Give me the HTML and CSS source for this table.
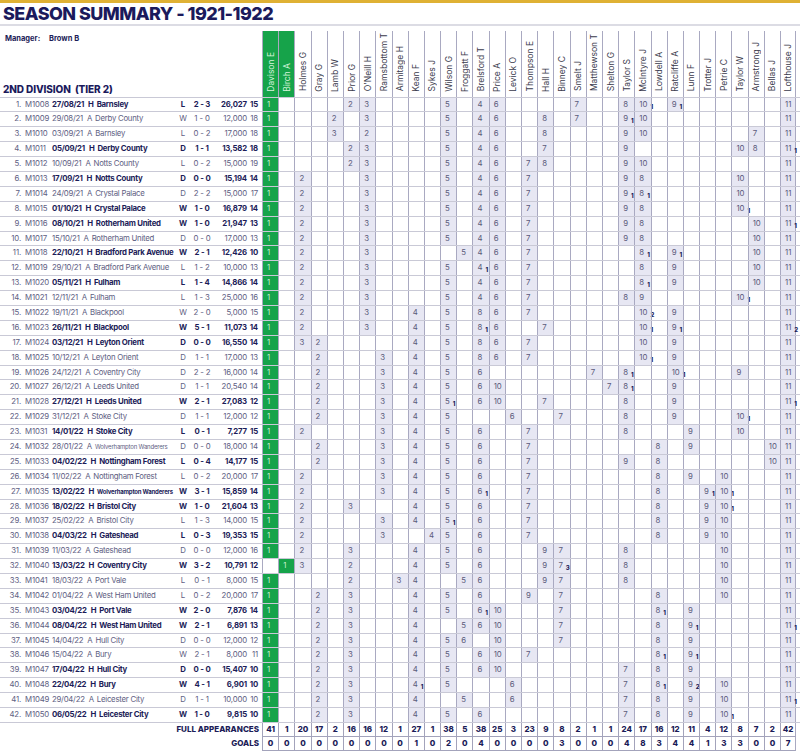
FILE: index.html
```html
<!DOCTYPE html>
<html lang="en">
<head>
<meta charset="utf-8">
<title>Season Summary 1921-1922</title>
<link rel="stylesheet" href="styles.css">
</head>
<body>
<div class="topbar"></div>
<h1 class="title">SEASON SUMMARY - 1921-1922</h1>
<div class="rule"></div>
<div class="sheet" id="sheet">
  <div class="row head" id="head">
    <div class="head-left">
      <div class="manager"><span class="mlabel">Manager:</span><span class="mname">Brown B</span></div>
      <div class="division">2ND DIVISION&nbsp; (TIER 2)</div>
    </div>
  </div>
</div>
<script src="app.js"></script>
</body>
</html>
```
FILE: styles.css
```css
* { box-sizing: border-box; }
body {
  margin: 0;
  background: #ffffff;
  font-family: Inter, "Noto Sans", sans-serif;
  color: #1c1c58;
}
.topbar { height: 3px; background: #dfb134; }
.title {
  margin: 0;
  height: 21px;
  padding-left: 3px;
  font-size: 18px;
  line-height: 21px;
  font-weight: 800;
  letter-spacing: -0.55px;
  color: #1b1a5c;
}
.rule { height: 2px; background: #dcdce4; }
.sheet { margin-top: 5px; width: 800px; }
.row {
  display: grid;
  grid-template-columns: 23px 27px 128px 10px 28px 32px 14px repeat(33, 16.2px);
  height: 14.9px;
  border-bottom: 1px solid #c9c9d6;
}
.head { height: 66.5px; }
.head-left {
  grid-column: 1 / 8;
  display: flex;
  flex-direction: column;
  justify-content: space-between;
  padding: 3px 0 2px 5px;
}
.manager { font-size: 7.5px; font-weight: 700; color: #1c1c58; }
.mlabel { display: inline-block; width: 44px; }
.division {
  margin-left: -2px;
  font-size: 10px;
  font-weight: 800;
  letter-spacing: -0.1px;
  color: #1b1a5c;
}
.ph {
  border-left: 1px solid #a9a9c1;
  display: flex;
  align-items: flex-end;
  justify-content: center;
  padding-bottom: 5px;
}
.ph span {
  writing-mode: vertical-rl;
  transform: rotate(180deg);
  font-size: 8.5px;
  color: #3a3a4c;
  white-space: nowrap;
}
.ph.g { background: #16a34a; }
.ph.g span { color: #d6f5db; }
.ph.last, .p.last, .f.last { border-right: 1px solid #a9a9c1; }

.c {
  font-size: 7.8px;
  line-height: 13.9px;
  letter-spacing: -0.15px;
  white-space: nowrap;
  color: #5e5e82;
}
.num { text-align: right; padding-right: 2px; }
.code { padding-left: 2px; }
.fix { padding-left: 2px; letter-spacing: -0.25px; }
.fix .ven { padding: 0 3px 0 4px; }
.fix .small { font-size: 6px; letter-spacing: -0.2px; }
.res { text-align: center; }
.score { text-align: center; }
.att { text-align: right; padding-right: 1px; }
.pos { text-align: right; padding-right: 4px; }
.home .fix, .home .res, .home .score, .home .att, .home .pos {
  font-weight: 700;
  color: #1c1c58;
}

.p {
  border-left: 1px solid #a9a9c1;
  padding-left: 4px;
  font-size: 7.8px;
  line-height: 13.9px;
  white-space: nowrap;
  color: #5a5a7a;
}
.p.v { background: #e7e7f3; }
.p.g { background: #16a34a; color: #c9f1cf; }
.p sub {
  font-size: 6px;
  font-weight: 800;
  color: #1c1c58;
  vertical-align: -2px;
  line-height: 0;
  margin-left: 3px;
}

.foot { border-bottom: none; height: 14px; }
.flabel {
  grid-column: 1 / 8;
  text-align: right;
  padding-right: 3px;
  font-size: 8px;
  font-weight: 800;
  line-height: 13px;
  color: #1c1c58;
}
.f {
  border-left: 1px solid #a3a3bb;
  border-bottom: 1px solid #a3a3bb;
  text-align: center;
  font-size: 8px;
  font-weight: 800;
  line-height: 13px;
  color: #1c1c58;
}
```
FILE: app.js
```js
var players = ["Davison E","Birch A","Holmes G","Gray G","Lamb W","Prior G","O'Neill H","Ramsbottom T","Armitage H","Kean F","Sykes J","Wilson G","Froggatt F","Brelsford T","Price A","Levick O","Thompson E","Hall H","Binney C","Smelt J","Matthewson T","Shelton G","Taylor S","McIntyre J","Lowdell A","Ratcliffe A","Lunn F","Trotter J","Petrie C","Taylor W","Armstrong J","Bellas J","Lofthouse J"];

var matches = [
["M1008","27/08/21","H","Barnsley","L","2 - 3","26,027","15","0:1 5:2 6:3 11:5 13:4 14:6 19:7 22:8 23:10/1 25:9/1 32:11"],
["M1009","29/08/21","A","Derby County","W","1 - 0","12,000","18","0:1 4:2 6:3 11:5 13:4 14:6 17:8 19:7 22:9/1 23:10 32:11"],
["M1010","03/09/21","A","Barnsley","L","0 - 2","17,000","18","0:1 4:3 6:2 11:5 13:4 14:6 17:8 22:9 23:10 30:7 32:11"],
["M1011","05/09/21","H","Derby County","D","1 - 1","13,582","18","0:1 5:2 6:3 11:5 13:4 14:6 17:7 22:9 29:10 30:8 32:11/1"],
["M1012","10/09/21","A","Notts County","L","0 - 2","15,000","19","0:1 5:2 6:3 11:5 13:4 14:6 16:7 17:8 22:9 23:10 32:11"],
["M1013","17/09/21","H","Notts County","D","0 - 0","15,194","14","0:1 2:2 6:3 11:5 13:4 14:6 16:7 22:9 23:8 29:10 32:11"],
["M1014","24/09/21","A","Crystal Palace","D","2 - 2","15,000","17","0:1 2:2 6:3 11:5 13:4 14:6 16:7 22:9/1 23:8/1 29:10 32:11"],
["M1015","01/10/21","H","Crystal Palace","W","1 - 0","16,879","14","0:1 2:2 6:3 11:5 13:4 14:6 16:7 22:9 23:8 29:10/1 32:11"],
["M1016","08/10/21","H","Rotherham United","W","1 - 0","21,947","13","0:1 2:2 6:3 11:5 13:4 14:6 16:7 22:9 23:8 30:10 32:11/1"],
["M1017","15/10/21","A","Rotherham United","D","0 - 0","17,000","13","0:1 2:2 6:3 11:5 13:4 14:6 16:7 22:9 23:8 30:10 32:11"],
["M1018","22/10/21","H","Bradford Park Avenue","W","2 - 1","12,426","10","0:1 2:2 6:3 12:5 13:4 14:6 16:7 23:8/1 25:9/1 30:10 32:11"],
["M1019","29/10/21","A","Bradford Park Avenue","L","1 - 2","10,000","13","0:1 2:2 6:3 11:5 13:4/1 14:6 16:7 23:8 25:9 30:10 32:11"],
["M1020","05/11/21","H","Fulham","L","1 - 4","14,866","14","0:1 2:2 6:3 11:5 13:4 14:6 16:7 23:8/1 25:9 30:10 32:11"],
["M1021","12/11/21","A","Fulham","L","1 - 3","25,000","16","0:1 2:2 6:3 11:5 13:4 14:6 16:7 22:8 23:9 29:10/1 32:11"],
["M1022","19/11/21","A","Blackpool","W","2 - 0","5,000","15","0:1 2:2 6:3 9:4 11:5 13:8 14:6 16:7 23:10/2 25:9 32:11"],
["M1023","26/11/21","H","Blackpool","W","5 - 1","11,073","14","0:1 2:2 6:3 9:4 11:5 13:8/1 14:6 17:7 23:10/1 25:9/1 32:11/2"],
["M1024","03/12/21","H","Leyton Orient","D","0 - 0","16,550","14","0:1 2:3 3:2 9:4 11:5 13:8 14:6 16:7 23:10 25:9 32:11"],
["M1025","10/12/21","A","Leyton Orient","D","1 - 1","17,000","13","0:1 3:2 7:3 9:4 11:5 13:8 14:6 16:7 23:10/1 25:9 32:11"],
["M1026","24/12/21","A","Coventry City","D","2 - 2","16,000","14","0:1 3:2 7:3 9:4 11:5 13:6 20:7 22:8/1 25:10/1 29:9 32:11"],
["M1027","26/12/21","A","Leeds United","D","1 - 1","20,540","14","0:1 3:2 7:3 9:4 11:5 13:6 14:10 21:7 22:8/1 25:9 32:11"],
["M1028","27/12/21","H","Leeds United","W","2 - 1","27,083","12","0:1 3:2 7:3 9:4 11:5/1 13:6 14:10 17:7 22:8 25:9 32:11/1"],
["M1029","31/12/21","A","Stoke City","D","1 - 1","12,000","12","0:1 3:2 7:3 9:4 11:5 15:6 18:7 22:8 25:9 29:10/1 32:11"],
["M1031","14/01/22","H","Stoke City","L","0 - 1","7,277","15","0:1 2:2 7:3 9:4 11:5 13:6 16:7 22:8 26:9 29:10 32:11"],
["M1032","28/01/22","A","Wolverhampton Wanderers","D","0 - 0","18,000","14","0:1 3:2 7:3 9:4 11:5 13:6 16:7 24:8 26:9 31:10 32:11"],
["M1033","04/02/22","H","Nottingham Forest","L","0 - 4","14,177","15","0:1 3:2 7:3 9:4 11:5 13:6 16:7 22:9 24:8 31:10 32:11"],
["M1034","11/02/22","A","Nottingham Forest","L","0 - 2","20,000","17","0:1 2:2 7:3 9:4 11:5 13:6 16:7 24:8 26:9 28:10 32:11"],
["M1035","13/02/22","H","Wolverhampton Wanderers","W","3 - 1","15,859","14","0:1 2:2 7:3 9:4 11:5 13:6/1 16:7 24:8 27:9/1 28:10/1 32:11"],
["M1036","18/02/22","H","Bristol City","W","1 - 0","21,604","13","0:1 2:2 5:3 9:4 11:5 13:6 16:7 24:8 27:9 28:10/1 32:11"],
["M1037","25/02/22","A","Bristol City","L","1 - 3","14,000","15","0:1 2:2 7:3 9:4 11:5/1 13:6 16:7 24:8 27:9 28:10 32:11"],
["M1038","04/03/22","H","Gateshead","L","0 - 3","19,353","15","0:1 2:2 7:3 10:4 11:5 13:6 16:7 24:8 27:9 28:10 32:11"],
["M1039","11/03/22","A","Gateshead","D","0 - 0","12,000","16","0:1 2:2 5:3 9:4 11:5 13:6 17:9 18:7 22:8 28:10 32:11"],
["M1040","13/03/22","H","Coventry City","W","3 - 2","10,791","12","1:1 2:3 5:2 9:4 11:5 13:6 17:9 18:7/3 22:8 28:10 32:11"],
["M1041","18/03/22","A","Port Vale","L","0 - 1","8,000","15","0:1 5:2 8:3 9:4 12:5 13:6 17:9 18:7 22:8 28:10 32:11"],
["M1042","01/04/22","A","West Ham United","L","0 - 2","20,000","17","0:1 3:2 5:3 9:4 11:5 13:6 16:9 18:7 24:8 28:10 32:11"],
["M1043","03/04/22","H","Port Vale","W","2 - 0","7,876","14","0:1 3:2 5:3 9:4 11:5 13:6/1 14:10 18:7 24:8/1 26:9 32:11"],
["M1044","08/04/22","H","West Ham United","W","2 - 1","6,891","13","0:1 3:2 5:3 9:4 12:5 13:6 14:10 18:7 24:8 26:9/1 32:11/1"],
["M1045","14/04/22","A","Hull City","D","0 - 0","12,000","12","0:1 3:2 5:3 9:4 11:5 12:6 14:10 18:7 24:8 26:9 32:11"],
["M1046","15/04/22","A","Bury","W","2 - 1","8,000","11","0:1 3:2 5:3 9:4 11:5 13:6 14:10 16:7 24:8/1 26:9/1 32:11"],
["M1047","17/04/22","H","Hull City","D","0 - 0","15,407","10","0:1 3:2 5:3 9:4 11:5 13:6 14:10 22:7 24:8 26:9 32:11"],
["M1048","22/04/22","H","Bury","W","4 - 1","6,901","10","0:1 3:2 5:3 9:4/1 11:5 15:6 22:7 24:8/1 26:9/2 28:10 32:11"],
["M1049","29/04/22","A","Leicester City","D","1 - 1","10,000","10","0:1 3:2 5:3 9:4 12:5 15:6 22:7 24:8 26:9 28:10 32:11/1"],
["M1050","06/05/22","H","Leicester City","W","1 - 0","9,815","10","0:1 3:2 5:3 9:4 11:5 13:6 22:7 24:8 26:9 28:10/1 32:11"]
];

var apps  = [41,1,20,17,2,16,16,12,1,27,1,38,5,38,25,3,23,9,8,2,1,1,24,17,16,12,11,4,12,8,7,2,42];
var goals = [0,0,0,0,0,0,0,0,0,1,0,2,0,4,0,0,0,0,3,0,0,0,4,8,3,4,4,1,3,3,0,0,7];

var sheet = document.getElementById("sheet");
var head = document.getElementById("head");

function el(tag, cls, text) {
  var e = document.createElement(tag);
  if (cls) e.className = cls;
  if (text !== undefined) e.textContent = text;
  return e;
}

players.forEach(function (name, i) {
  var th = el("div", "ph" + (i < 2 ? " g" : "") + (i === players.length - 1 ? " last" : ""));
  th.appendChild(el("span", "", name));
  head.appendChild(th);
});

matches.forEach(function (m, idx) {
  var row = el("div", "row " + (m[2] === "H" ? "home" : "away"));
  row.appendChild(el("div", "c num", (idx + 1) + "."));
  row.appendChild(el("div", "c code", m[0]));
  var fix = el("div", "c fix");
  fix.appendChild(el("span", "date", m[1]));
  fix.appendChild(el("span", "ven", m[2]));
  fix.appendChild(el("span", m[3].length > 20 ? "small" : "opp", m[3]));
  row.appendChild(fix);
  row.appendChild(el("div", "c res", m[4]));
  row.appendChild(el("div", "c score", m[5]));
  row.appendChild(el("div", "c att", m[6]));
  row.appendChild(el("div", "c pos", m[7]));

  var cells = {};
  m[8].split(" ").forEach(function (tok) {
    var parts = tok.split(":");
    var vg = parts[1].split("/");
    cells[parseInt(parts[0], 10)] = { v: vg[0], g: vg[1] };
  });
  for (var i = 0; i < players.length; i++) {
    var c = cells[i];
    var cls = "p";
    if (c) cls += (i < 2 ? " g" : " v");
    if (i === players.length - 1) cls += " last";
    var td = el("div", cls);
    if (c) {
      td.appendChild(document.createTextNode(c.v));
      if (c.g) td.appendChild(el("sub", "", c.g));
    }
    row.appendChild(td);
  }
  sheet.appendChild(row);
});

function footRow(label, vals) {
  var row = el("div", "row foot");
  row.appendChild(el("div", "flabel", label));
  vals.forEach(function (v, i) {
    row.appendChild(el("div", "f" + (i === vals.length - 1 ? " last" : ""), String(v)));
  });
  sheet.appendChild(row);
}
footRow("FULL APPEARANCES", apps);
footRow("GOALS", goals);
```
